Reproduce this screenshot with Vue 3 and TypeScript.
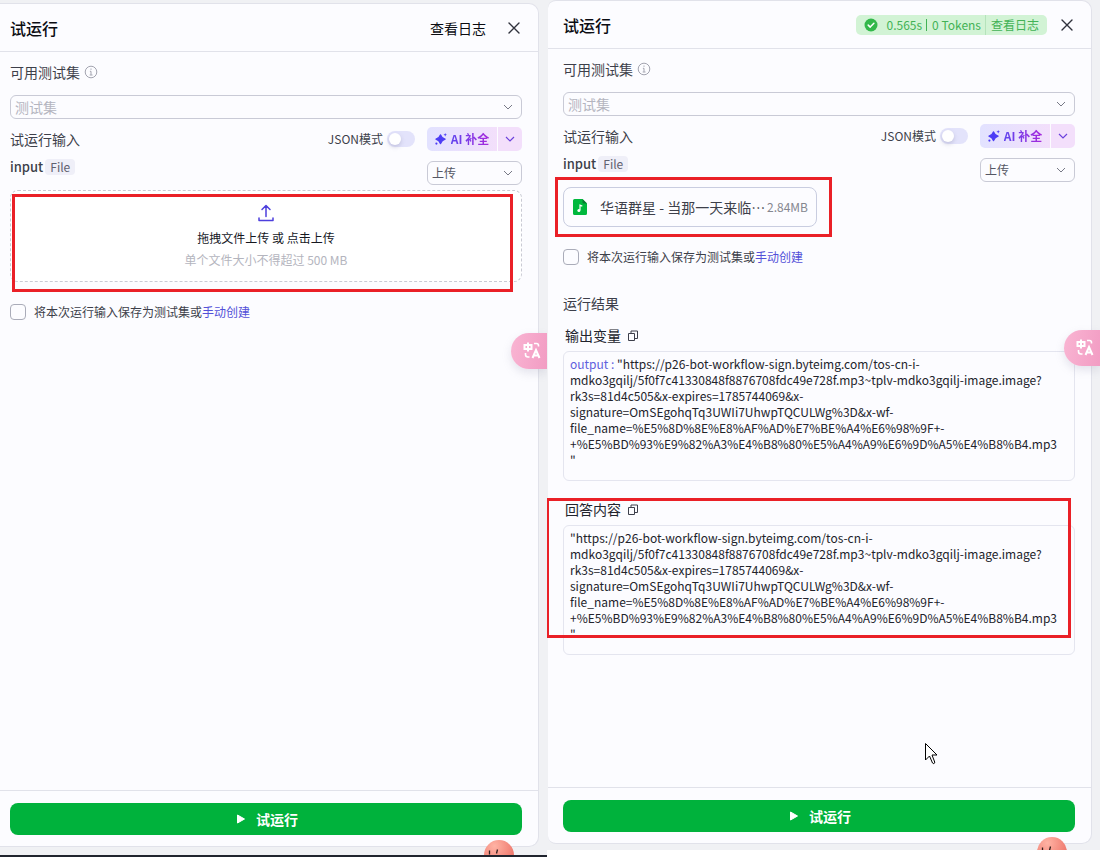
<script setup lang="ts">
import { ref } from 'vue'

interface Panel {
  id: string
  finished: boolean
}

const panels: Panel[] = [
  { id: 'before', finished: false },
  { id: 'after', finished: true },
]

const jsonMode = ref<Record<string, boolean>>({ before: false, after: false })
const saveInput = ref<Record<string, boolean>>({ before: false, after: false })

const urlLines = [
  '"https://p26-bot-workflow-sign.byteimg.com/tos-cn-i-',
  'mdko3gqilj/5f0f7c41330848f8876708fdc49e728f.mp3~tplv-mdko3gqilj-image.image?',
  'rk3s=81d4c505&x-expires=1785744069&x-',
  'signature=OmSEgohqTq3UWIi7UhwpTQCULWg%3D&x-wf-',
  'file_name=%E5%8D%8E%E8%AF%AD%E7%BE%A4%E6%98%9F+-',
  '+%E5%BD%93%E9%82%A3%E4%B8%80%E5%A4%A9%E6%9D%A5%E4%B8%B4.mp3',
  '"',
]

const results = [
  { title: '输出变量', name: 'output', marked: false },
  { title: '回答内容', name: '', marked: true },
]
</script>

<template>
  <main class="page">
    <section v-for="p in panels" :key="p.id" class="stage" :class="p.id">
      <div class="panel">
        <header class="head">
          <h1>试运行</h1>
          <div v-if="p.finished" class="status">
            <svg class="ok" viewBox="0 0 14 14" aria-hidden="true">
              <circle cx="7" cy="7" r="6.5" fill="#32b84a" />
              <path d="M4.2 7.1l2 2 3.700-3.800" fill="none" stroke="#fff" stroke-width="1.500" stroke-linecap="round" stroke-linejoin="round" />
            </svg>
            <span class="time">0.565s</span>
            <i class="bar"></i>
            <span>0 Tokens</span>
            <button type="button" class="log-small">查看日志</button>
          </div>
          <button v-else type="button" class="log">查看日志</button>
          <button type="button" class="close" aria-label="关闭">
            <svg viewBox="0 0 12 12"><path d="M1 1l10 10M11 1L1 11" fill="none" stroke="#30323c" stroke-width="1.400" stroke-linecap="round" /></svg>
          </button>
        </header>

        <div class="body">
          <div class="label-row">
            <label :for="p.id + '-set'">可用测试集</label>
            <svg class="info" viewBox="0 0 14 14" aria-hidden="true">
              <circle cx="7" cy="7" r="5.800" fill="none" stroke="#a3a4b0" />
              <path d="M7 3.500v1.300M5.900 6.300H7v3.500M5.700 10h2.800" fill="none" stroke="#a3a4b0" />
            </svg>
          </div>
          <div class="select set">
            <select :id="p.id + '-set'"><option>测试集</option></select>
            <svg viewBox="0 0 10 6" aria-hidden="true"><path d="M1 1l4 4 4-4" /></svg>
          </div>

          <div class="run-row">
            <h2>试运行输入</h2>
            <label class="json">
              JSON模式
              <input v-model="jsonMode[p.id]" type="checkbox" role="switch" class="switch" />
            </label>
            <div class="ai">
              <button type="button" class="ai-main">
                <svg viewBox="0 0 12 12" aria-hidden="true">
                  <path d="M5.500 2C6.200 4.600 7 5.300 10 6.200 7 7.200 6.400 8 5.500 10.500 4.700 8 4 7.200 1 6.200 4 5.300 4.800 4.600 5.500 2z" fill="#4d3df5" stroke="#4d3df5" stroke-width="1.400" stroke-linejoin="round" />
                  <path d="M10.200 0l.5 1.300 1.300.5-1.300.5-.5 1.300-.5-1.300-1.300-.5 1.300-.5z" fill="#4d3df5" />
                  <circle cx="1.400" cy="10.600" r="1.100" fill="#4d3df5" />
                </svg>
                <span>AI 补全</span>
              </button>
              <button type="button" class="ai-more" aria-label="更多">
                <svg viewBox="0 0 10 6"><path d="M1 1l4 4 4-4" /></svg>
              </button>
            </div>
          </div>

          <div class="input-row">
            <label class="name" :for="p.id + '-mode'">input</label>
            <span class="type">File</span>
            <div class="select mode">
              <select :id="p.id + '-mode'"><option>上传</option></select>
              <svg viewBox="0 0 10 6" aria-hidden="true"><path d="M1 1l4 4 4-4" /></svg>
            </div>
          </div>

          <div v-if="p.finished" class="file">
            <i class="mark file-mark"></i>
            <svg class="file-icon" viewBox="0 0 14 16" aria-hidden="true">
              <path d="M1.500 0H9.500L14 4.500V14.500A1.500 1.500 0 0 1 12.500 16H1.500A1.500 1.500 0 0 1 0 14.500V1.500A1.500 1.500 0 0 1 1.500 0z" fill="#00b83d" />
              <path d="M9.500 0V3.500a1 1 0 0 0 1 1H14z" fill="#087a32" />
              <path d="M7 11.300V6.200l2.300.9" fill="none" stroke="#fff" stroke-width="1.200" />
              <circle cx="5.900" cy="11.400" r="1.500" fill="#fff" />
            </svg>
            <span class="file-name">华语群星 - 当那一天来临⋯</span>
            <span class="size">2.84MB</span>
          </div>
          <button v-else type="button" class="drop">
            <i class="mark drop-mark"></i>
            <svg viewBox="0 0 16 18" aria-hidden="true">
              <path d="M8 12.500V1.500M4 5.500l4-4 4 4M1 14v2.500h14V14" fill="none" stroke="#4d3fdd" stroke-width="1.500" stroke-linejoin="round" stroke-linecap="round" />
            </svg>
            <span class="drop-title">拖拽文件上传 或 点击上传</span>
            <span class="drop-hint">单个文件大小不得超过 500 MB</span>
          </button>

          <div class="save">
            <input :id="p.id + '-save'" v-model="saveInput[p.id]" type="checkbox" />
            <label :for="p.id + '-save'">将本次运行输入保存为测试集或</label>
            <a href="#">手动创建</a>
          </div>

          <template v-if="p.finished">
            <h2 class="result-head">运行结果</h2>
            <article v-for="r in results" :key="r.title" class="result">
              <i v-if="r.marked" class="mark result-mark"></i>
              <header>
                <h3>{{ r.title }}</h3>
                <button type="button" class="copy" :aria-label="'复制' + r.title">
                  <svg viewBox="0 0 10 11"><path d="M.5 3.500h6v7h-6zM3 3V1h6.500v7.500H7" fill="none" stroke="#3d3f4b" /></svg>
                </button>
              </header>
              <div class="output">
                <div v-for="(line, i) in urlLines" :key="i" class="line"><span v-if="r.name && i === 0" class="key">{{ r.name + ' : ' }}</span><span>{{ line }}</span></div>
              </div>
            </article>
          </template>
        </div>

        <footer class="foot">
          <button type="button" class="run">
            <svg viewBox="0 0 8 10" aria-hidden="true"><path d="M.5 1v8L7.500 5z" fill="#fff" stroke="#fff" stroke-linejoin="round" /></svg>
            试运行
          </button>
        </footer>
      </div>

      <button type="button" class="translate" aria-label="翻译">
        <svg viewBox="0 0 18 18" fill="none" stroke="#fff" stroke-width="2">
          <path d="M1.500 3h7v4h-7zM5 .5v9" />
          <path d="M9.500 16L13 8l3.500 8M10.800 13.500h4.400" />
          <path d="M11 1.500h2.500a2 2 0 0 1 2 2v1M2.500 11v1.500a2.500 2.500 0 0 0 2.500 2.500h1.500" stroke-width="1.600" />
        </svg>
      </button>
      <svg class="mascot" viewBox="0 0 30 30" aria-hidden="true">
        <defs>
          <radialGradient :id="p.id + '-skin'" cx=".35" cy=".2" r=".9">
            <stop offset="0" stop-color="#ffb3a4" />
            <stop offset="1" stop-color="#e9665c" />
          </radialGradient>
        </defs>
        <circle cx="15" cy="15" r="15" :fill="`url(#${p.id}-skin)`" />
        <path d="M5.500 10.500v4M13.500 9.500l-1 4" stroke="#33201f" stroke-width="1.300" />
      </svg>
      <svg v-if="p.finished" class="cursor" viewBox="0 0 13 22" aria-hidden="true">
        <path d="M.5.500v16.500l4-4 3 7c.6 1.300 2.800.4 2.200-1L7 12h5z" fill="#fff" stroke="#000" />
      </svg>
    </section>
  </main>
</template>

<style>
body {
  margin: 0;
  background: #fff;
}
</style>

<style scoped>
* {
  box-sizing: border-box;
}
.page {
  display: grid;
  grid-template-columns: 547fr 553fr;
  align-items: start;
  min-height: 100vh;
  padding-right: 2px;
  font-family: "Noto Sans CJK SC", sans-serif;
  font-size: 12px;
  line-height: 20px;
  color: #3d3f4a;
}
button,
select {
  font: inherit;
  color: inherit;
  border: 0;
  padding: 0;
  margin: 0;
  background: none;
}
h1,
h2,
h3 {
  margin: 0;
  font-size: 14px;
  font-weight: 400;
  line-height: 20px;
}
svg {
  display: block;
  flex: none;
}
.stage {
  position: relative;
  display: flex;
  overflow: hidden;
  background: #f0f1f4;
}
.before {
  min-height: 100vh;
  padding: 3px 8px 8px 0;
  border-bottom: 2px solid #20242e;
}
.after {
  min-height: calc(100vh - 7px);
  padding: 0 8px 6px 1px;
}
.panel {
  flex: 1;
  min-width: 0;
  display: flex;
  flex-direction: column;
  background: #fcfcff;
  border: 1px solid #e1e2ea;
  border-left: 0;
  border-radius: 0 10px 10px 0;
}
.after .panel {
  border-radius: 8px 10px 10px 8px;
}
.head {
  display: flex;
  align-items: center;
  height: 48px;
  padding: 0 18px 0 10px;
  border-bottom: 1px solid #e1e2ea;
}
.after .head {
  padding-left: 15px;
}
.head h1 {
  flex: 1;
  font-size: 16px;
  font-weight: 500;
  line-height: 24px;
  color: #0b0c12;
}
.log {
  font-size: 14px;
  color: #0b0c12;
}
.close {
  margin-left: 22px;
}
.close svg {
  width: 12px;
  height: 12px;
}
.status {
  display: flex;
  align-items: center;
  height: 20px;
  padding: 0 8px;
  border-radius: 5px;
  background: #d2f3d5;
  color: #42b255;
}
.status + .close {
  margin-left: 14px;
}
.ok {
  width: 14px;
  height: 14px;
}
.time {
  margin-left: 9px;
}
.bar {
  width: 1px;
  height: 12px;
  margin: 0 5px 0 4px;
  background: #42b255;
}
.log-small {
  margin-left: 4px;
  padding-left: 5px;
  border-left: 1px solid #b5e3bb;
}
.body {
  flex: 1;
  display: flex;
  flex-direction: column;
  padding: 10px 16px 20px 10px;
}
.after .body {
  padding-left: 15px;
}
.label-row {
  display: flex;
  align-items: center;
  gap: 4px;
  font-size: 14px;
}
.info {
  width: 14px;
  height: 14px;
}
.select {
  position: relative;
  height: 24px;
}
.select select {
  display: block;
  width: 100%;
  height: 24px;
  padding: 0 24px 0 4px;
  appearance: none;
  border: 1px solid #c9cad6;
  border-radius: 6px;
  line-height: 20px;
}
.select svg {
  position: absolute;
  right: 9px;
  top: 9px;
  width: 10px;
  height: 6px;
  pointer-events: none;
}
.select path {
  fill: none;
  stroke: #777986;
}
.set {
  margin-top: 13px;
}
.set select {
  font-size: 14px;
  color: #b4b5c0;
}
.run-row {
  display: flex;
  align-items: center;
  margin-top: 8px;
}
.run-row h2 {
  flex: 1;
}
.json {
  display: flex;
  align-items: center;
  gap: 4px;
}
.switch {
  appearance: none;
  width: 28px;
  height: 16px;
  margin: 0;
  padding: 2px;
  border-radius: 8px;
  background: #e3e3fb;
}
.switch::before {
  content: "";
  display: block;
  width: 12px;
  height: 12px;
  border-radius: 50%;
  background: #fff;
  box-shadow: 0 2px 4px #8c8cb066;
}
.switch:checked::before {
  margin-left: 12px;
}
.ai {
  display: flex;
  width: 95px;
  height: 24px;
  margin-left: 12px;
  overflow: hidden;
  border-radius: 5px;
  background: linear-gradient(90deg, #e2e2ff, #f3dffb 75%);
}
.ai-main {
  flex: 1;
  display: flex;
  align-items: center;
  justify-content: center;
  gap: 4px;
  font-weight: 700;
}
.ai-main svg {
  width: 12px;
  height: 12px;
}
.ai-main span {
  color: transparent;
  background: linear-gradient(90deg, #6045ee, #a629dc);
  background-clip: text;
}
.ai-more {
  display: flex;
  align-items: center;
  justify-content: center;
  width: 25px;
  border-left: 1px solid #fcfcff;
}
.ai-more svg {
  width: 10px;
  height: 6px;
}
.ai-more path {
  fill: none;
  stroke: #6c42dc;
  stroke-width: 1.2;
}
.input-row {
  display: flex;
  align-items: flex-start;
  margin-top: 8px;
}
.name {
  font-size: 13px;
  font-weight: 500;
  line-height: 16px;
}
.type {
  margin-left: 2px;
  padding: 0 5px;
  border-radius: 4px;
  background: #efeff8;
  line-height: 16px;
  color: #5f6170;
}
.mode {
  width: 95px;
  margin: 2px 0 0 auto;
  color: #555764;
}
.mark {
  position: absolute;
  border: 3px solid #ea2027;
  pointer-events: none;
}
.drop {
  position: relative;
  display: flex;
  flex-direction: column;
  align-items: center;
  min-height: 92px;
  margin-top: 5px;
  padding: 13px 0 0;
  border: 1px dashed #c9cad4;
  border-radius: 8px;
  background: #fff;
}
.drop-mark {
  inset: 3px 8px -11px 1px;
}
.drop svg {
  width: 16px;
  height: 18px;
}
.drop-title {
  margin-top: 6px;
  color: #16181f;
}
.drop-hint {
  margin-top: 2px;
  color: #b4b5be;
}
.file {
  position: relative;
  display: flex;
  align-items: center;
  width: 254px;
  height: 40px;
  margin-top: 5px;
  padding: 0 8px 0 9px;
  border: 1px solid #c9cde0;
  border-radius: 8px;
}
.file-mark {
  inset: -11px -16px -11px -9px;
}
.file-icon {
  width: 14px;
  height: 16px;
}
.file-name {
  flex: 1;
  margin-left: 13px;
  font-size: 14px;
  white-space: nowrap;
}
.size {
  color: #85878f;
}
.save {
  display: flex;
  align-items: center;
  height: 16px;
  margin-top: 22px;
}
.save input {
  appearance: none;
  width: 16px;
  height: 16px;
  margin: 0 8px 0 0;
  border: 1px solid #aaacb9;
  border-radius: 4px;
}
.save input:checked {
  background: #4d3fdd;
}
.save a {
  color: #5350d8;
  text-decoration: none;
}
.result-head {
  margin-top: 28px;
}
.result {
  position: relative;
  margin-top: 12px;
}
.result + .result {
  margin-top: 18px;
}
.result header {
  display: flex;
  align-items: center;
  gap: 7px;
  padding-left: 2px;
  color: #22242d;
}
.copy svg {
  width: 10px;
  height: 11px;
}
.output {
  min-height: 130px;
  margin-top: 6px;
  padding: 4px 6px;
  border: 1px solid #e4e5ef;
  border-radius: 6px;
  line-height: 16px;
  color: #22232b;
}
.line {
  white-space: pre-wrap;
}
.key {
  color: #6060dd;
}
.result-mark {
  inset: -1px 4px 17px -17px;
}
.foot {
  padding: 12px 16px 11px 10px;
  border-top: 1px solid #e1e2ea;
}
.after .foot {
  padding-left: 15px;
}
.run {
  display: flex;
  align-items: center;
  justify-content: center;
  gap: 11px;
  width: 100%;
  height: 32px;
  padding-left: 3px;
  border-radius: 8px;
  background: #00b23c;
  color: #fff;
  font-size: 14px;
  font-weight: 700;
}
.run svg {
  width: 8px;
  height: 10px;
}
.translate {
  position: absolute;
  right: 0;
  top: 333px;
  display: flex;
  align-items: center;
  width: 36px;
  height: 36px;
  padding-left: 12px;
  border-radius: 18px 0 0 18px;
  background: linear-gradient(100deg, #f9b5d3, #f29cc3);
  box-shadow: 0 4px 10px #8080a033;
}
.after .translate {
  top: 330px;
}
.translate svg {
  width: 18px;
  height: 18px;
}
.mascot {
  position: absolute;
  right: 33px;
  bottom: -15px;
  width: 30px;
  height: 30px;
}
.after .mascot {
  bottom: -17px;
}
.cursor {
  position: absolute;
  left: 378px;
  top: 743px;
  width: 13px;
  height: 22px;
}
</style>
